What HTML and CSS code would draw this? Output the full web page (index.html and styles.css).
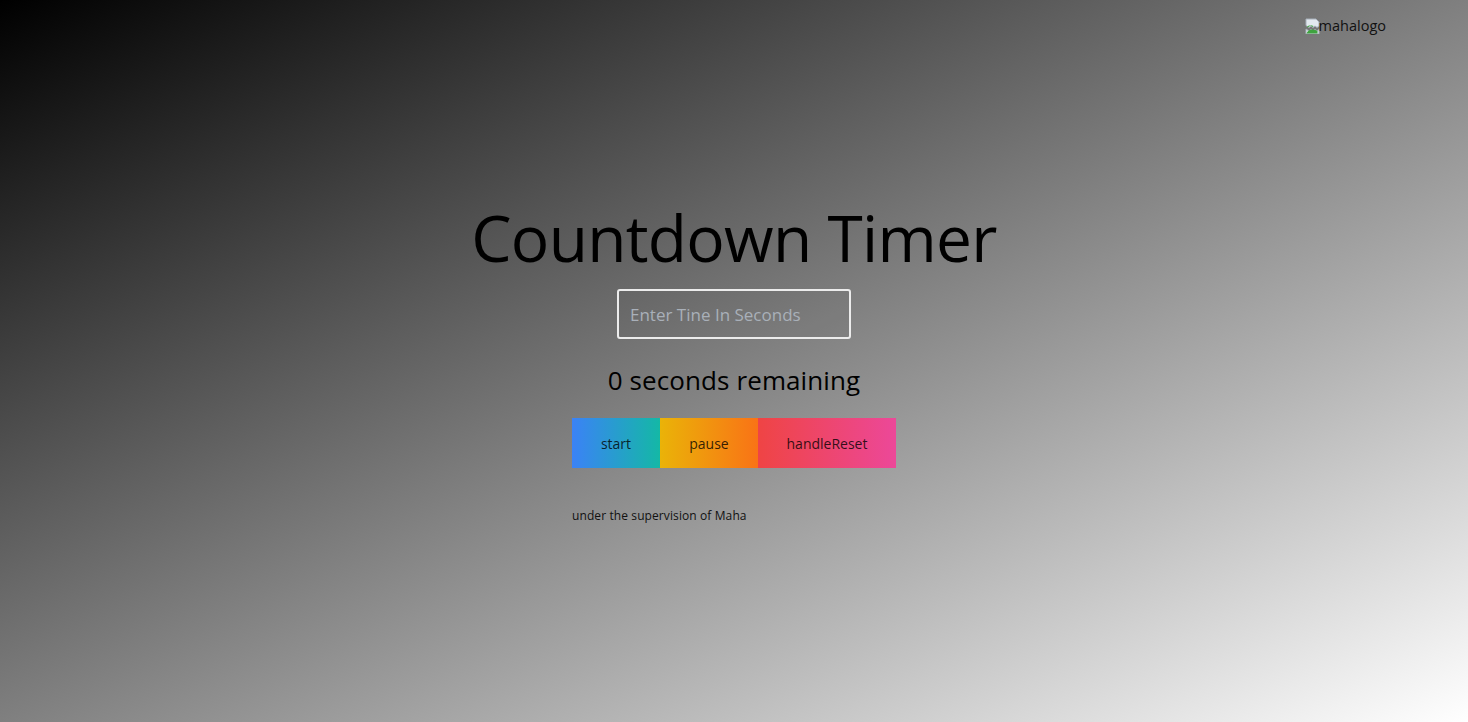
FILE: index.html
```html
<!DOCTYPE html>
<html lang="en">
<head>
<meta charset="utf-8">
<title>Countdown Timer</title>
<link rel="stylesheet" href="styles.css">
</head>
<body>
<div class="page">
  <header class="topbar">
    <span class="logo">
      <svg class="broken" width="16" height="16" viewBox="0 0 16 16" aria-hidden="true">
        <path d="M1 1h10l3 3v4l-2 1.5-2-1.5-2 1.5-2-1.5-2 1.5-3-2z" fill="#e3e9ef" stroke="#a7b0ba" stroke-width="1"/>
        <path d="M1 11l3 2 2-1.5 2 1.5 2-1.5 2 1.5 2-1.5v4.5H1z" fill="#e3e9ef" stroke="#a7b0ba" stroke-width="1"/>
        <path d="M1.5 15.5c1.5-3.5 4.5-5 9-3.5l2 1v2.5z" fill="#3fa33f"/>
        <path d="M1.5 9.5c2-2.5 4-3 7-1.5l-1 1-2-1.5-2 1.5z" fill="#3fa33f"/>
      </svg><span class="logo-alt">mahalogo</span>
    </span>
  </header>
  <main class="timer">
    <h1 class="title">Countdown Timer</h1>
    <input class="seconds-input" type="text" placeholder="Enter Tine In Seconds">
    <p class="remaining">0 seconds remaining</p>
    <div class="controls">
      <div class="buttons">
        <button class="btn btn-start">start</button>
        <button class="btn btn-pause">pause</button>
        <button class="btn btn-reset">handleReset</button>
      </div>
      <p class="credit">under the supervision of Maha</p>
    </div>
  </main>
</div>
</body>
</html>
```

FILE: styles.css
```css
* { box-sizing: border-box; }

html, body {
  margin: 0;
  height: 100%;
}

body {
  font-family: "Open Sans", "Noto Sans", "Liberation Sans", sans-serif;
  color: #000;
  background: linear-gradient(to bottom right, #000000, #ffffff);
  min-height: 722px;
}

.page {
  display: flex;
  flex-direction: column;
  min-height: 722px;
}

.topbar {
  display: flex;
  justify-content: flex-end;
  padding: 16px 82px 0 0;
  height: 198px;
}

.logo {
  display: flex;
  align-items: center;
  height: 20px;
  font-size: 14.5px;
  color: #111;
}

.broken { display: block; margin-right: -2px; }

.logo-alt { line-height: 20px; }

.timer {
  display: flex;
  flex-direction: column;
  align-items: center;
}

.title {
  margin: 0;
  font-weight: 400;
  font-size: 64px;
  line-height: 80px;
  letter-spacing: -0.7px;
}

.seconds-input {
  margin-top: 11px;
  width: 234px;
  height: 50px;
  border: 2px solid #ececec;
  border-radius: 3px;
  background: rgba(0, 0, 0, 0.03);
  padding: 0 11px;
  font-family: inherit;
  font-size: 17px;
  color: #222;
  outline: none;
}

.seconds-input::placeholder { color: #a9b0b9; }

.remaining {
  margin: 20px 0 0;
  font-size: 26px;
  line-height: 42px;
  letter-spacing: 0.1px;
}

.controls {
  margin-top: 17px;
  display: flex;
  flex-direction: column;
  align-items: flex-start;
}

.buttons { display: flex; }

.btn {
  height: 50px;
  border: 0;
  padding: 0;
  font-family: inherit;
  font-size: 14px;
  color: rgba(0, 0, 0, 0.8);
  cursor: pointer;
}

.btn-start { width: 88px; background: linear-gradient(to right, #3b82f6, #14b8a6); }
.btn-pause { width: 98px; background: linear-gradient(to right, #eab308, #f97316); }
.btn-reset { width: 138px; background: linear-gradient(to right, #ef4444, #ec4899); }

.credit {
  margin: 39px 0 0;
  font-size: 12px;
  line-height: 18px;
  letter-spacing: 0.1px;
  color: #111;
}
```
